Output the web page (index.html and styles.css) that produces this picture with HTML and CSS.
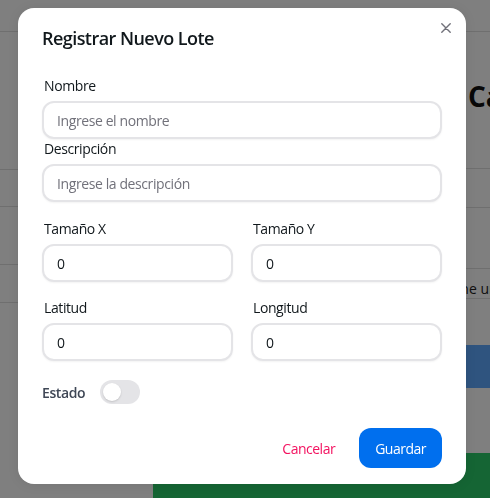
FILE: index.html
```html
<!DOCTYPE html>
<html lang="es">
<head>
<meta charset="utf-8">
<title>Registrar Nuevo Lote</title>
<link rel="stylesheet" href="styles.css">
</head>
<body>
<div class="page">
  <header class="topbar"></header>
  <main class="main">
    <section class="left-col">
      <div class="l-row l-row-a"></div>
      <div class="l-row l-row-b"></div>
    </section>
    <section class="right-col">
      <h1 class="right-title">Catastro</h1>
      <div class="r-row"></div>
      <div class="r-search">Seleccione un lote</div>
      <div class="r-btn"></div>
    </section>
  </main>
  <div class="green-panel"></div>
</div>
<div class="backdrop"></div>

<div class="modal" role="dialog" aria-labelledby="modal-title">
  <button class="close" aria-label="Cerrar">
    <svg viewBox="0 0 10 10" width="10" height="10"><path d="M0.8 0.8 L9.2 9.2 M9.2 0.8 L0.8 9.2" stroke="currentColor" stroke-width="1.4" stroke-linecap="round"/></svg>
  </button>
  <header class="modal-header" id="modal-title">Registrar Nuevo Lote</header>
  <div class="modal-body">
    <div class="field">
      <label class="label">Nombre</label>
      <input class="input" type="text" placeholder="Ingrese el nombre">
    </div>
    <div class="field">
      <label class="label">Descripción</label>
      <input class="input" type="text" placeholder="Ingrese la descripción">
    </div>
    <div class="grid2 grid-a">
      <div class="field">
        <label class="label">Tamaño X</label>
        <input class="input" type="text" value="0">
      </div>
      <div class="field">
        <label class="label">Tamaño Y</label>
        <input class="input" type="text" value="0">
      </div>
    </div>
    <div class="grid2 grid-b">
      <div class="field">
        <label class="label">Latitud</label>
        <input class="input" type="text" value="0">
      </div>
      <div class="field">
        <label class="label">Longitud</label>
        <input class="input" type="text" value="0">
      </div>
    </div>
    <div class="estado">
      <span class="estado-label">Estado</span>
      <span class="switch"><span class="knob"></span></span>
    </div>
  </div>
  <footer class="modal-footer">
    <button class="btn btn-cancel">Cancelar</button>
    <button class="btn btn-save">Guardar</button>
  </footer>
</div>
</body>
</html>
```

FILE: styles.css
```css
html, body {
  margin: 0;
  padding: 0;
  overflow: hidden;
  height: 100%;
}
body {
  background: #ffffff;
  font-family: "Open Sans", "Liberation Sans", sans-serif;
  color: #11181c;
}
.page {
  width: 490px;
  height: 498px;
  position: relative;
  overflow: hidden;
}
.topbar {
  height: 31px;
  border-bottom: 1px solid #dedede;
}
.main {
  display: grid;
  grid-template-columns: 466px 1fr;
  height: 421px;
}
.left-col {
  padding-top: 137px;
}
.l-row {
  border-top: 1px solid #dedede;
  border-bottom: 1px solid #dedede;
}
.l-row-a { height: 36px; }
.l-row-b { height: 37px; margin-top: 57px; }

.right-col {
  padding-left: 2px;
  min-width: 0;
  white-space: nowrap;
}
.right-title {
  margin: 46px 0 0;
  font-size: 28px;
  line-height: 36px;
  font-weight: 700;
  color: #111;
}
.r-row {
  margin-top: 54px;
  height: 38px;
  border-top: 1px solid #dedede;
  border-bottom: 1px solid #dedede;
  margin-left: -2px;
}
.r-search {
  margin-top: 60px;
  margin-left: -60px;
  height: 19px;
  padding-top: 10px;
  line-height: 20px;
  font-size: 14px;
  color: #222;
  border-top: 1px solid #dedede;
  border-bottom: 1px solid #dedede;
}
.r-btn {
  margin-top: 46px;
  height: 43px;
  background: #5ea8ff;
  margin-left: -2px;
}
.green-panel {
  margin-left: 153px;
  height: 60px;
  background: #2aca68;
  border-top-left-radius: 8px;
}

.backdrop {
  position: fixed;
  inset: 0;
  background: rgba(0, 0, 0, 0.5);
}

.modal {
  position: absolute;
  left: 18px;
  top: 8px;
  width: 448px;
  box-sizing: border-box;
  background: #fff;
  border-radius: 16px;
  box-shadow: 0 1px 12px rgba(0, 0, 0, 0.08);
  letter-spacing: -0.4px;
}
.close {
  position: absolute;
  top: 10px;
  right: 10px;
  width: 20px;
  height: 20px;
  padding: 0;
  border: 0;
  background: transparent;
  color: #71717a;
  display: flex;
  align-items: center;
  justify-content: center;
}
.close svg { display: block; }

.modal-header {
  padding: 16px 24px;
  font-size: 18px;
  line-height: 28px;
  font-weight: 600;
  letter-spacing: -0.55px;
  color: #11181c;
}
.modal-body {
  padding: 8px 24px;
}
.field {
  display: flex;
  flex-direction: column;
}
.label {
  font-size: 14px;
  line-height: 20px;
  padding-left: 2px;
  margin-bottom: 5px;
  color: #11181c;
}
.input {
  box-sizing: border-box;
  width: 100%;
  height: 38px;
  border: 2px solid #e4e4e7;
  border-radius: 12px;
  padding: 0 13px;
  font-family: inherit;
  font-size: 14px;
  letter-spacing: -0.4px;
  color: #11181c;
  background: #fff;
  outline: none;
  box-shadow: 0 1px 2px rgba(0, 0, 0, 0.05);
}
.input::placeholder {
  color: #71717a;
  opacity: 1;
}
.grid2 {
  display: grid;
  grid-template-columns: 1fr 1fr;
  column-gap: 18px;
}
.grid-a { margin-top: 17px; }
.grid-b { margin-top: 16px; }

.estado {
  margin-top: 19px;
  display: flex;
  align-items: center;
  gap: 15px;
  height: 24px;
}
.estado-label {
  font-size: 14px;
  font-weight: 600;
  color: #3f4756;
}
.switch {
  width: 40px;
  height: 24px;
  border-radius: 12px;
  background: #e4e4e7;
  display: flex;
  align-items: center;
  padding-left: 3px;
  box-sizing: border-box;
}
.knob {
  width: 18px;
  height: 18px;
  border-radius: 50%;
  background: #fff;
  box-shadow: 0 1px 2px rgba(0, 0, 0, 0.15);
}

.modal-footer {
  display: flex;
  justify-content: flex-end;
  gap: 8px;
  padding: 16px 24px;
}
.btn {
  height: 40px;
  padding: 0 16px;
  border: 0;
  border-radius: 12px;
  font-family: inherit;
  font-size: 14px;
  letter-spacing: -0.5px;
}
.btn-cancel {
  background: transparent;
  color: #f31260;
}
.btn-save {
  background: #006fee;
  color: #fff;
}
```
